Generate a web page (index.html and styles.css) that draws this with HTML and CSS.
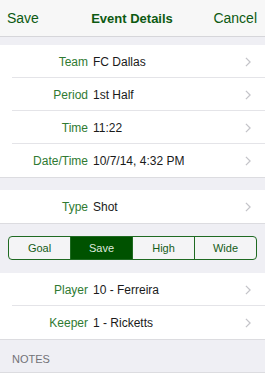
FILE: index.html
```html
<!DOCTYPE html>
<html lang="en">
<head>
    <meta charset="UTF-8">
    <meta name="viewport" content="width=device-width, initial-scale=1.0">
    <title>Event Details</title>
    <link rel="stylesheet" href="styles.css">
</head>
<body>
    <header class="navbar">
        <span class="nav-btn left">Save</span>
        <h1>Event Details</h1>
        <span class="nav-btn right">Cancel</span>
    </header>

    <div class="spacer top"></div>

    <section class="group">
        <div class="row">
            <span class="label">Team</span>
            <span class="value">FC Dallas</span>
            <svg class="chevron" viewBox="0 0 7 12"><path d="M1 1l5 5-5 5" /></svg>
        </div>
        <div class="row">
            <span class="label">Period</span>
            <span class="value">1st Half</span>
            <svg class="chevron" viewBox="0 0 7 12"><path d="M1 1l5 5-5 5" /></svg>
        </div>
        <div class="row">
            <span class="label">Time</span>
            <span class="value">11:22</span>
            <svg class="chevron" viewBox="0 0 7 12"><path d="M1 1l5 5-5 5" /></svg>
        </div>
        <div class="row">
            <span class="label">Date/Time</span>
            <span class="value">10/7/14, 4:32 PM</span>
            <svg class="chevron" viewBox="0 0 7 12"><path d="M1 1l5 5-5 5" /></svg>
        </div>
    </section>

    <div class="spacer gap"></div>

    <section class="group">
        <div class="row">
            <span class="label">Type</span>
            <span class="value">Shot</span>
            <svg class="chevron" viewBox="0 0 7 12"><path d="M1 1l5 5-5 5" /></svg>
        </div>
    </section>

    <div class="segment-wrap">
        <div class="segmented">
            <div class="segment">Goal</div>
            <div class="segment active">Save</div>
            <div class="segment">High</div>
            <div class="segment">Wide</div>
        </div>
    </div>

    <section class="group">
        <div class="row">
            <span class="label">Player</span>
            <span class="value">10 - Ferreira</span>
            <svg class="chevron" viewBox="0 0 7 12"><path d="M1 1l5 5-5 5" /></svg>
        </div>
        <div class="row">
            <span class="label">Keeper</span>
            <span class="value">1 - Ricketts</span>
            <svg class="chevron" viewBox="0 0 7 12"><path d="M1 1l5 5-5 5" /></svg>
        </div>
    </section>

    <div class="section-header">NOTES</div>
    <section class="group notes"></section>
</body>
</html>
```

FILE: styles.css
```css
* {
    margin: 0;
    padding: 0;
    box-sizing: border-box;
    font-family: 'Liberation Sans', Arial, sans-serif;
}

body {
    background-color: #efeff4;
    color: #111;
    width: 265px;
    height: 381px;
    overflow: hidden;
}

.navbar {
    height: 37px;
    background-color: #f7f7f7;
    border-bottom: 1px solid #d6d6da;
    display: grid;
    grid-template-columns: 1fr auto 1fr;
    align-items: center;
    padding: 0 8px 0 7px;
}

.navbar h1 {
    font-size: 13px;
    font-weight: bold;
    color: #0d5a12;
}

.nav-btn {
    font-size: 14px;
    color: #0d5a12;
}

.nav-btn.right {
    text-align: right;
}

.spacer.top {
    height: 8px;
}

.spacer.gap {
    height: 12px;
}

.group {
    background-color: #fff;
    border-bottom: 1px solid #dcdce0;
}

.row {
    height: 33px;
    display: flex;
    align-items: center;
    position: relative;
    padding-right: 14px;
}

.row + .row::before {
    content: '';
    position: absolute;
    top: -1px;
    left: 12px;
    right: 0;
    border-top: 1px solid #e4e4e8;
}

.label {
    width: 88px;
    text-align: right;
    font-size: 12px;
    color: #2f7a32;
}

.value {
    flex: 1;
    padding-left: 5px;
    font-size: 12px;
    color: #1a1a1a;
}

.chevron {
    width: 6px;
    height: 10px;
    fill: none;
    stroke: #c4c4c9;
    stroke-width: 1.5;
}

.segment-wrap {
    padding: 12px 8px 13px 8px;
}

.segmented {
    display: flex;
    height: 24px;
    border: 1px solid #1f6a22;
    border-radius: 4px;
    overflow: hidden;
    background-color: #f4f4f6;
}

.segment {
    flex: 1;
    display: flex;
    align-items: center;
    justify-content: center;
    font-size: 11px;
    color: #145c18;
}

.segment + .segment {
    border-left: 1px solid #1f6a22;
}

.segment.active {
    background-color: #005200;
    color: #dfe9df;
}

.section-header {
    padding: 13px 0 7px 12px;
    font-size: 11px;
    color: #727277;
}

.notes {
    height: 20px;
    border-top: 1px solid #dcdce0;
    border-bottom: none;
}
```
